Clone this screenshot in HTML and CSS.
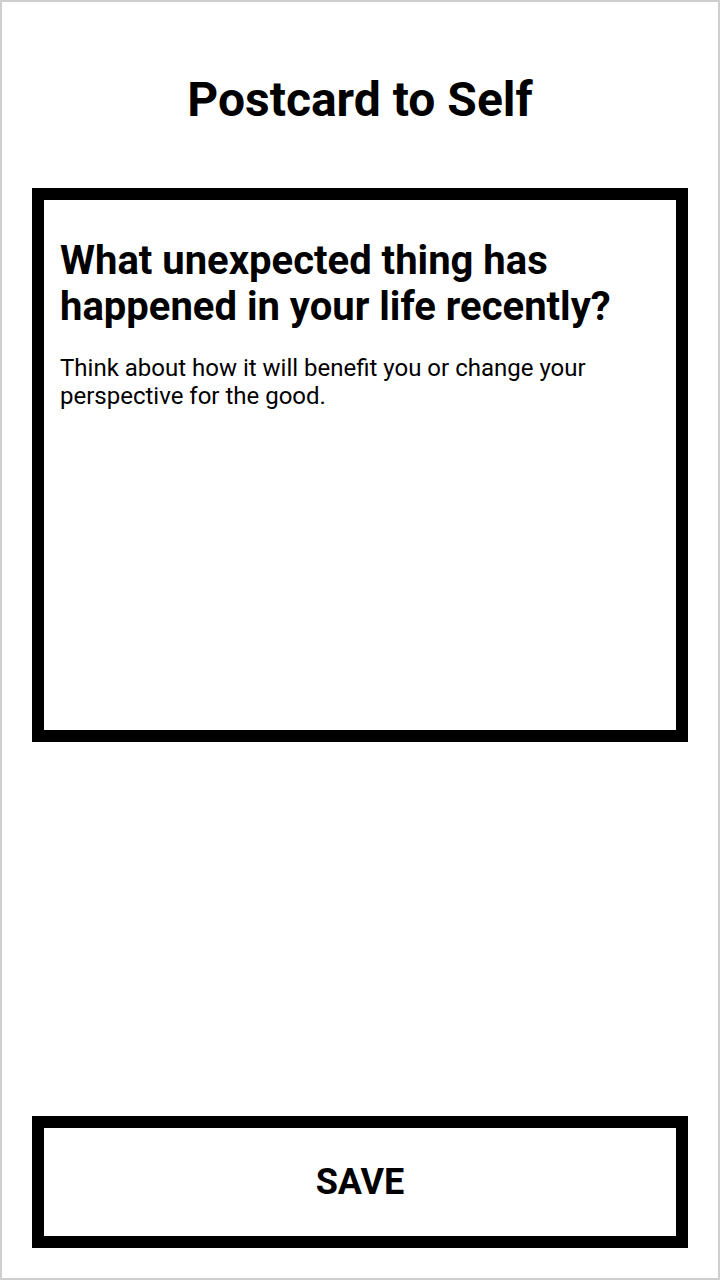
FILE: index.html
```html
<!DOCTYPE html>
<html lang="en">
<head>
  <meta charset="UTF-8" />
  <meta name="viewport" content="width=device-width, initial-scale=1.0" />
  <title>Postcard to Self</title>
  <link rel="stylesheet" href="styles.css">
</head>
<body>
  <div class="page">
    <h1 class="title">Postcard to Self</h1>

    <div class="card">
      <h2 class="question">What unexpected thing has happened in your life recently?</h2>
      <p class="hint">Think about how it will benefit you or change your perspective for the good.</p>
    </div>

    <div class="spacer"></div>

    <button class="save-btn">SAVE</button>
  </div>
</body>
</html>
```

FILE: styles.css
```css
html, body {
  margin: 0;
  padding: 0;
  background-color: #fff;
}
body {
  font-family: Roboto, "Liberation Sans", sans-serif;
  color: #000;
}
.page {
  box-sizing: border-box;
  width: 720px;
  height: 1280px;
  border: 2px solid #cfcfcf;
  padding: 30px;
  display: flex;
  flex-direction: column;
}
.title {
  margin: 40px 0 0;
  font-size: 48px;
  line-height: 56px;
  font-weight: 700;
  text-align: center;
}
.card {
  margin-top: 60px;
  height: 554px;
  box-sizing: border-box;
  border: 12px solid #000;
  padding: 38px 16px 16px;
}
.question {
  margin: 0;
  font-size: 40px;
  line-height: 46px;
  font-weight: 700;
}
.hint {
  margin: 24px 0 0;
  font-size: 24px;
  line-height: 28px;
}
.spacer {
  flex: 1;
}
.save-btn {
  height: 132px;
  box-sizing: border-box;
  border: 12px solid #000;
  background: #fff;
  font-family: inherit;
  font-size: 36px;
  font-weight: 700;
  color: #000;
  padding: 0;
  cursor: pointer;
}
```
